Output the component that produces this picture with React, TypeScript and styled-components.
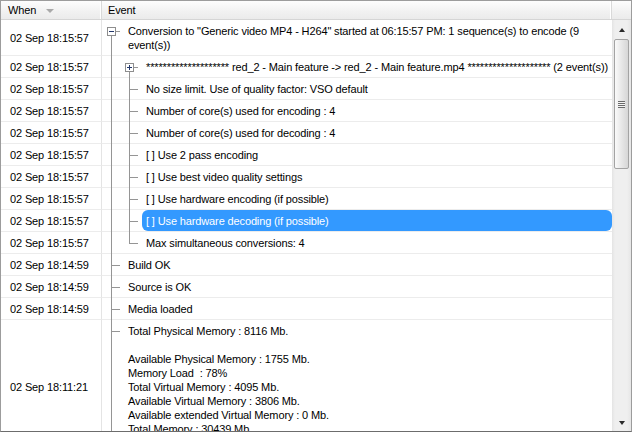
import React from 'react';
import styled, { createGlobalStyle, css } from 'styled-components';

const GlobalStyle = createGlobalStyle`
  body {
    margin: 0;
    font-family: 'Liberation Sans', Arial, sans-serif;
    font-size: 11px;
    letter-spacing: -0.13px;
    color: #000;
    background: #fff;
  }
`;

const LINE = '#959595';

type Guide = 'box' | 'tee' | 'end' | 'through';

interface LogRow {
  when: string;
  guides: Guide[];
  sign?: '+' | '-';
  lines: string[];
  selected?: boolean;
}

const rows: LogRow[] = [
  {
    when: '02 Sep 18:15:57',
    guides: ['box'],
    sign: '-',
    lines: [
      'Conversion to "Generic video MP4 - H264" started at 06:15:57 PM: 1 sequence(s) to encode (9',
      'event(s))',
    ],
  },
  {
    when: '02 Sep 18:15:57',
    guides: ['through', 'box'],
    sign: '+',
    lines: [
      '******************** red_2 - Main feature -> red_2 - Main feature.mp4 ******************** (2 event(s))',
    ],
  },
  { when: '02 Sep 18:15:57', guides: ['through', 'tee'], lines: ['No size limit. Use of quality factor: VSO default'] },
  { when: '02 Sep 18:15:57', guides: ['through', 'tee'], lines: ['Number of core(s) used for encoding : 4'] },
  { when: '02 Sep 18:15:57', guides: ['through', 'tee'], lines: ['Number of core(s) used for decoding : 4'] },
  { when: '02 Sep 18:15:57', guides: ['through', 'tee'], lines: ['[ ] Use 2 pass encoding'] },
  { when: '02 Sep 18:15:57', guides: ['through', 'tee'], lines: ['[ ] Use best video quality settings'] },
  { when: '02 Sep 18:15:57', guides: ['through', 'tee'], lines: ['[ ] Use hardware encoding (if possible)'] },
  {
    when: '02 Sep 18:15:57',
    guides: ['through', 'tee'],
    lines: ['[ ] Use hardware decoding (if possible)'],
    selected: true,
  },
  { when: '02 Sep 18:15:57', guides: ['through', 'end'], lines: ['Max simultaneous conversions: 4'] },
  { when: '02 Sep 18:14:59', guides: ['tee'], lines: ['Build OK'] },
  { when: '02 Sep 18:14:59', guides: ['tee'], lines: ['Source is OK'] },
  { when: '02 Sep 18:14:59', guides: ['tee'], lines: ['Media loaded'] },
  {
    when: '02 Sep 18:11:21',
    guides: ['tee'],
    lines: [
      'Total Physical Memory : 8116 Mb.',
      ' ',
      'Available Physical Memory : 1755 Mb.',
      'Memory Load  : 78%',
      'Total Virtual Memory : 4095 Mb.',
      'Available Virtual Memory : 3806 Mb.',
      'Available extended Virtual Memory : 0 Mb.',
      'Total Memory : 30439 Mb.',
      'Available Memory : 25802 Mb.',
    ],
  },
];

// window frame
const Frame = styled.div`
  width: 632px;
  height: 432px;
  box-sizing: border-box;
  border: 1px solid #9c9c9c;
  border-bottom-color: #6c6c6c;
  display: flex;
  flex-direction: column;
  overflow: hidden;
  background: #fff;
`;

const Header = styled.div`
  display: grid;
  grid-template-columns: 101px 1fr 19px;
  height: 18px;
  border-bottom: 1px solid #d5d5d5;
  background: linear-gradient(#fdfdfd, #f1f1f1 60%, #ebebeb);
  flex-shrink: 0;
`;

const HeaderCell = styled.div<{ $pad: number; $last?: boolean }>`
  display: flex;
  align-items: center;
  gap: 10px;
  padding-left: ${(p) => p.$pad}px;
  border-right: ${(p) => (p.$last ? 'none' : '1px solid #d9d9d9')};
  box-shadow: ${(p) => (p.$last ? 'none' : 'inset -1px 0 0 #fff')};
`;

const SortArrow = styled.span`
  width: 0;
  height: 0;
  border-left: 4px solid transparent;
  border-right: 4px solid transparent;
  border-top: 4px solid #a9a9a9;
  margin-top: 1px;
`;

const Body = styled.div`
  flex: 1;
  display: flex;
  min-height: 0;
`;

const List = styled.div`
  flex: 1;
  overflow: hidden;
`;

const Row = styled.div`
  display: grid;
  grid-template-columns: 101px 1fr;
`;

const WhenCell = styled.div`
  display: flex;
  align-items: center;
  padding-left: 9px;
  border-right: 1px solid #e4e4e4;
  border-bottom: 1px solid #ececec;
  white-space: nowrap;
`;

const EventCell = styled.div`
  display: flex;
  align-items: stretch;
  border-bottom: 1px solid #ececec;
  min-width: 0;
`;

const vline = (top: string, h: string) => `linear-gradient(${LINE}, ${LINE}) 9px ${top} / 1px ${h} no-repeat`;
const hline = `linear-gradient(${LINE}, ${LINE}) 9px 11px / 9px 1px no-repeat`;

const guideBg: Record<Guide, string> = {
  through: vline('0', '100%'),
  tee: `${hline}, ${vline('0', '100%')}`,
  end: `${hline}, ${vline('0', '12px')}`,
  box: `${hline}, ${vline('16px', '100%')}`,
};

const Indent = styled.div<{ $kind: Guide }>`
  width: 18px;
  flex-shrink: 0;
  margin-bottom: -1px;
  display: flex;
  align-items: flex-start;
  background: ${(p) => guideBg[p.$kind]};
`;

const ExpandBox = styled.span<{ $sign: '+' | '-' }>`
  width: 9px;
  height: 9px;
  box-sizing: border-box;
  margin: 7px 0 0 5px;
  border: 1px solid #8e8e8e;
  background-color: #fff;
  ${(p) => css`
    background-image: linear-gradient(#23386b, #23386b)
      ${p.$sign === '+' ? ', linear-gradient(#23386b, #23386b)' : ''};
    background-repeat: no-repeat;
    background-size: 5px 1px ${p.$sign === '+' ? ', 1px 5px' : ''};
    background-position: 1px 3px ${p.$sign === '+' ? ', 3px 1px' : ''};
  `}
`;

const Label = styled.div<{ $selected?: boolean }>`
  flex: 1;
  margin-left: 4px;
  padding: 4px 4px 3px;
  line-height: 14px;
  white-space: pre;
  overflow: hidden;
  border-radius: 6px;
  ${(p) =>
    p.$selected &&
    css`
      background: #3399ff;
      color: #fff;
    `}
`;

const Scrollbar = styled.div`
  width: 19px;
  flex-shrink: 0;
  display: flex;
  flex-direction: column;
  align-items: center;
  background: linear-gradient(to right, #e4e4e4, #efefef 3px, #efefef 15px, #e6e6e6);
`;

const ArrowButton = styled.div<{ $dir: 'up' | 'down' }>`
  height: 17px;
  width: 100%;
  display: flex;
  align-items: center;
  justify-content: center;

  &::before {
    content: '';
    width: 0;
    height: 0;
    border-left: 3.5px solid transparent;
    border-right: 3.5px solid transparent;
    ${(p) =>
      p.$dir === 'up'
        ? 'border-bottom: 4px solid #2a2a2a; margin-top: 3px;'
        : 'border-top: 4px solid #2a2a2a; margin-top: 0;'}
  }
`;

const Thumb = styled.div`
  margin-top: 2px;
  width: 15px;
  height: 130px;
  box-sizing: border-box;
  border: 1px solid #a3a3a3;
  border-radius: 2px;
  background: linear-gradient(to right, #fafafa, #e9e9e9 45%, #d6d6d6);
  display: flex;
  align-items: center;
  justify-content: center;
`;

const Grip = styled.div`
  width: 7px;
  height: 7px;
  background: repeating-linear-gradient(#6a6a6a 0 1px, #f4f4f4 1px 2px);
`;

const Spacer = styled.div`
  flex: 1;
`;

const App: React.FC = () => (
  <>
    <GlobalStyle />
    <Frame>
      <Header>
        <HeaderCell $pad={7}>
          When
          <SortArrow />
        </HeaderCell>
        <HeaderCell $pad={6}>Event</HeaderCell>
        <HeaderCell $pad={0} $last />
      </Header>
      <Body>
        <List>
          {rows.map((r, i) => (
            <Row key={i}>
              <WhenCell>{r.when}</WhenCell>
              <EventCell>
                {r.guides.map((g, j) => (
                  <Indent key={j} $kind={g}>
                    {g === 'box' && r.sign && <ExpandBox $sign={r.sign} />}
                  </Indent>
                ))}
                <Label $selected={r.selected}>{r.lines.join('\n')}</Label>
              </EventCell>
            </Row>
          ))}
        </List>
        <Scrollbar>
          <ArrowButton $dir="up" />
          <Thumb>
            <Grip />
          </Thumb>
          <Spacer />
          <ArrowButton $dir="down" />
        </Scrollbar>
      </Body>
    </Frame>
  </>
);

export default App;
